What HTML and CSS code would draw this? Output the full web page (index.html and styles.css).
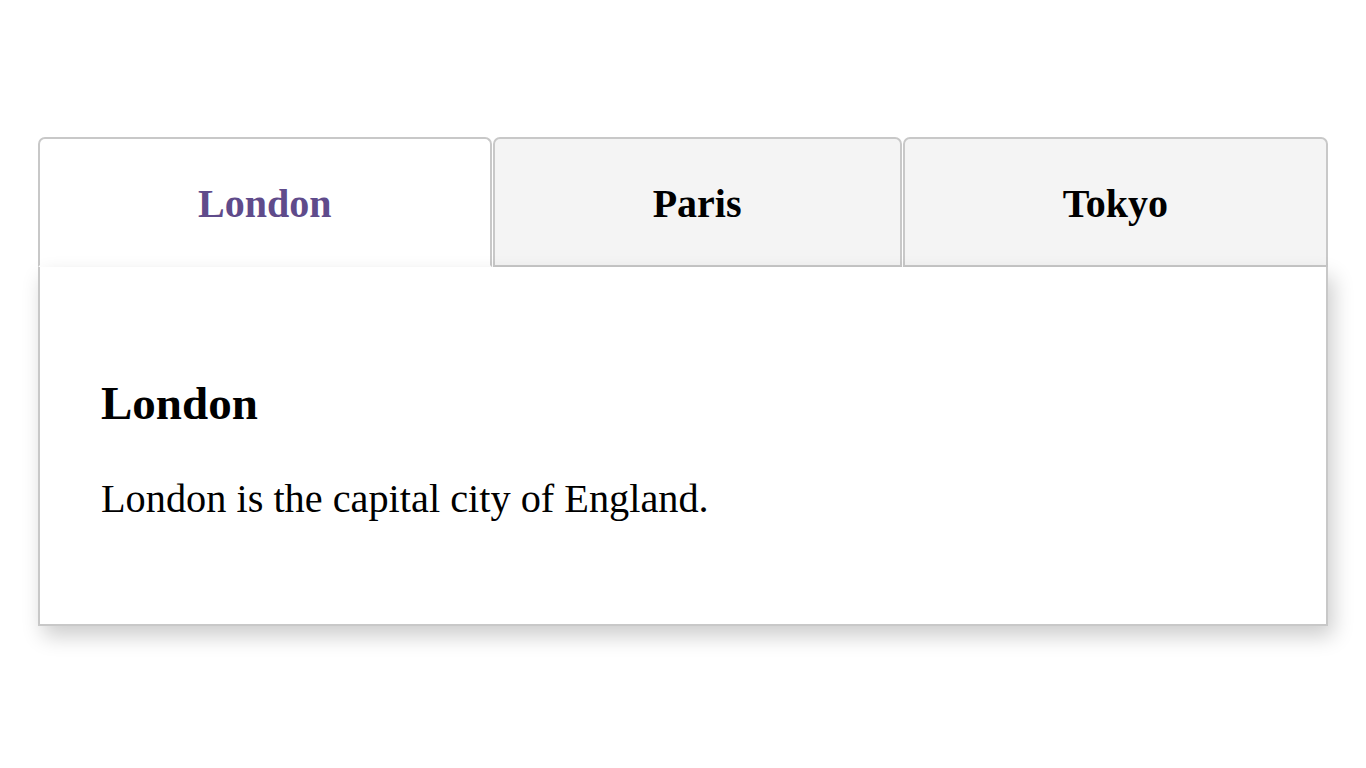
FILE: index.html
```html
<!DOCTYPE html>
<html lang="en">
<head>
<meta charset="utf-8">
<title>Tabs</title>
<link rel="stylesheet" href="styles.css">
</head>
<body>
<div class="tabs">
  <div class="tab-list">
    <button class="tab active">London</button>
    <button class="tab">Paris</button>
    <button class="tab">Tokyo</button>
  </div>
  <div class="panel">
    <h3 class="panel-title">London</h3>
    <p class="panel-text">London is the capital city of England.</p>
  </div>
</div>
</body>
</html>
```
FILE: styles.css
```css
html, body {
  margin: 0;
  padding: 0;
  background: #ffffff;
}
body {
  font-family: "Liberation Serif", "Times New Roman", serif;
  color: #000;
  padding: 137px 38px 120px;
  min-height: 768px;
  box-sizing: border-box;
}
.tabs {
  display: flex;
  flex-direction: column;
}
.tab-list {
  display: flex;
  gap: 1px;
}
.tab {
  flex: 1 1 auto;
  font-family: "Liberation Serif", "Times New Roman", serif;
  font-weight: bold;
  font-size: 40px;
  line-height: 46px;
  padding: 42px 10px 38px;
  background: #f4f4f4;
  color: #000;
  border: 2px solid #c8c8c8;
  border-radius: 7px 7px 0 0;
  cursor: pointer;
}
.tab.active {
  background: #ffffff;
  color: #5f4b8b;
  border-bottom-color: #ffffff;
}
.panel {
  border: 2px solid #c8c8c8;
  border-top: none;
  padding: 100px 61px 102px;
  box-shadow: 5px 10px 20px rgba(0, 0, 0, 0.2);
  background: #fff;
}
.panel-title {
  font-size: 47px;
  line-height: 55px;
  font-weight: bold;
  margin: 9px 0 45px;
}
.panel-text {
  font-size: 40.3px;
  line-height: 46px;
  margin: 0;
}
```
